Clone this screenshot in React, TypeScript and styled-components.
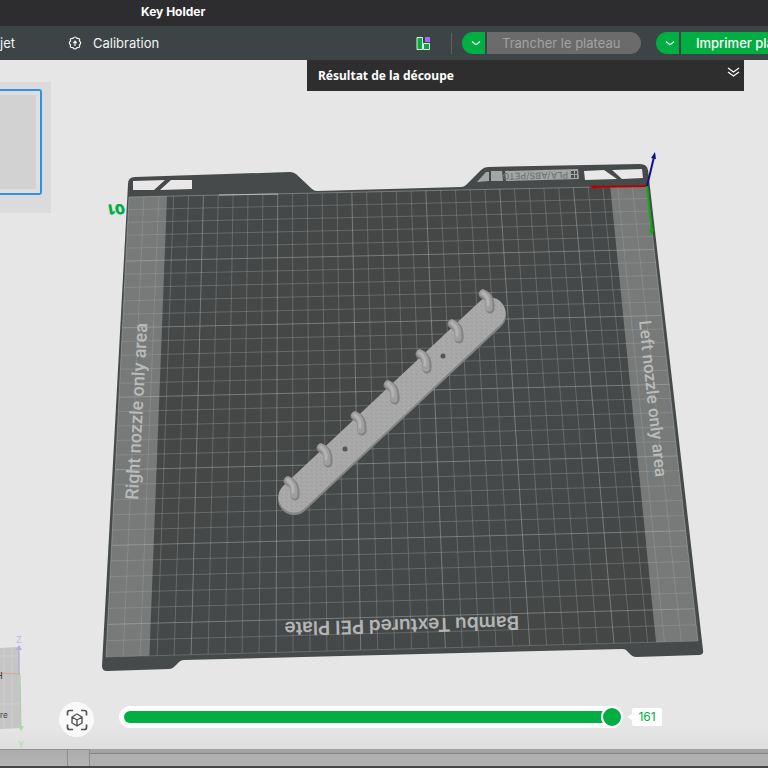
import React, { useState } from "react";
import styled, { createGlobalStyle } from "styled-components";

const GlobalStyle = createGlobalStyle`
  * { box-sizing: border-box; }
  body { margin: 0; background: #e6e6e6; font-family: Inter, "Noto Sans", sans-serif; }
  button { border: 0; padding: 0; font: inherit; color: inherit; cursor: pointer; }
`;

const Window = styled.div`
  min-height: 100vh;
  display: flex;
  flex-direction: column;
  overflow: hidden;
`;

const TitleBar = styled.header`
  height: 26px;
  padding-left: 141px;
  background: #2d2d2f;
  color: #fff;
  h1 { margin: 0; font-size: 12px; line-height: 24px; font-weight: 700; }
`;

const Toolbar = styled.nav`
  height: 34px;
  display: flex;
  align-items: center;
  background: #3c4446;
  color: #f4f5f5;
  font-size: 13px;
  line-height: 20px;
`;

const NavLink = styled.a`
  display: flex;
  align-items: center;
  gap: 11px;
  margin-right: 53px;
  color: inherit;
  text-decoration: none;
`;

const Tools = styled.div`
  margin-left: auto;
  display: flex;
  align-items: center;
`;

const IconButton = styled.button`
  display: flex;
  background: none;
`;

const Divider = styled.span`
  width: 1px;
  height: 21px;
  margin: 0 10px 0 20px;
  background: #5b6364;
`;

const Split = styled.div`
  display: flex;
  gap: 2px;
  & + & { margin-left: 15px; }
`;

const ArrowButton = styled.button`
  width: 23px;
  height: 22px;
  display: flex;
  align-items: center;
  justify-content: center;
  padding-left: 4px;
  border-radius: 11px 0 0 11px;
  background: #00ae42;
`;

const ActionButton = styled.button<{ $primary?: boolean }>`
  width: ${(p) => (p.$primary ? 87 : 154)}px;
  height: 22px;
  padding-left: 15px;
  overflow: hidden;
  white-space: nowrap;
  text-align: left;
  line-height: 21px;
  border-radius: ${(p) => (p.$primary ? "0" : "0 11px 11px 0")};
  background: ${(p) => (p.$primary ? "#00ae42" : "#6b6b6b")};
  color: ${(p) => (p.$primary ? "#fff" : "#a2a2a2")};
  font-weight: ${(p) => (p.$primary ? 500 : 400)};
`;

const Viewport = styled.main`
  position: relative;
  flex: 1;
  display: flex;
  flex-direction: column;
  justify-content: space-between;
  min-height: 480px;
  background: linear-gradient(#e6e6e6 calc(100% - 24px), #dedede);
`;

const Scene = styled.svg`
  position: absolute;
  inset: 0;
  width: 100%;
  height: 100%;
`;

const TopRow = styled.div`
  position: relative;
  display: flex;
  align-items: flex-start;
`;

const PlateList = styled.aside`
  width: 51px;
  height: 131px;
  margin-top: 22px;
  padding-top: 7px;
  background: #dbdbdb;
`;

const PlateThumb = styled.button`
  display: block;
  width: 42px;
  height: 106px;
  padding: 4px 4px 4px 0;
  border: 2px solid #2b93ec;
  border-left: 0;
  border-radius: 0 3px 3px 0;
  background: #dedede;
  &::before { content: ""; display: block; height: 100%; background: #d2d2d2; }
`;

const ResultPanel = styled.section`
  flex: 1;
  height: 31px;
  margin: 0 24px 0 256px;
  padding: 0 4px 0 11px;
  display: flex;
  justify-content: space-between;
  align-items: center;
  background: #2e2e2e;
  color: #fff;
  h2 { margin: 0; font-family: "Noto Sans", sans-serif; font-size: 12px; line-height: 30px; font-weight: 700; }
  button { margin-bottom: 7px; }
`;

const BottomRow = styled.div`
  position: relative;
  display: flex;
  align-items: center;
  padding: 0 106px 12px 59px;
`;

const RoundButton = styled.button`
  width: 35px;
  height: 35px;
  display: flex;
  align-items: center;
  justify-content: center;
  border-radius: 50%;
  background: #f9f9f9;
`;

const SliderGroup = styled.div`
  flex: 1;
  display: flex;
  align-items: center;
  gap: 9px;
  margin-left: 25px;
  padding-bottom: 6px;
`;

const Slider = styled.input`
  flex: 1;
  min-width: 0;
  height: 22px;
  margin: 0;
  padding: 0 0 0 5px;
  appearance: none;
  border-radius: 11px;
  background: #fff;
  &::-webkit-slider-runnable-track {
    height: 12px;
    border-radius: 6px;
    background: #00ae42;
  }
  &::-webkit-slider-thumb {
    appearance: none;
    width: 22px;
    height: 22px;
    margin-top: -5px;
    border: 2px solid #fff;
    border-radius: 50%;
    background: #00ae42;
  }
`;

const Value = styled.output`
  position: relative;
  width: 30px;
  border-radius: 2px;
  background: #fff;
  color: #00ae42;
  font-size: 12px;
  line-height: 18px;
  text-align: center;
  &::before {
    content: "";
    position: absolute;
    left: -5px;
    top: 6px;
    border: 3px solid transparent;
    border-right: 5px solid #fff;
    border-left: 0;
  }
`;

const Desktop = styled.footer`
  height: 19px;
  display: flex;
  background: linear-gradient(#929292 0 1px, #acacac 1px, #b4b4b4 17px, #4a4545 17px);
`;

const DesktopPane = styled.div<{ $width?: number }>`
  flex: ${(p) => (p.$width ? `0 0 ${p.$width}px` : 1)};
  height: 17px;
  border-right: 1px solid ${(p) => (p.$width ? "#8e8e8e" : "transparent")};
  background: ${(p) =>
    p.$width ? "none" : "linear-gradient(#a3a3a3 4px, #858585 4px 5px, #b0b0b0 5px)"};
`;

type Point = [number, number];

// Corners of the printable bed in drawing units: near origin row first.
const TL: Point = [129, 197];
const TR: Point = [647, 186];
const BR: Point = [698, 641];
const BL: Point = [106, 657];

// Perspective mapping of the unit square onto the bed.
const sx = TL[0] - TR[0] + BR[0] - BL[0];
const sy = TL[1] - TR[1] + BR[1] - BL[1];
const dx1 = TR[0] - BR[0];
const dx2 = BL[0] - BR[0];
const dy1 = TR[1] - BR[1];
const dy2 = BL[1] - BR[1];
const det = dx1 * dy2 - dx2 * dy1;
const g = (sx * dy2 - dx2 * sy) / det;
const h = (dx1 * sy - sx * dy1) / det;

function project(u: number, v: number): Point {
  const w = g * u + h * v + 1;
  return [
    ((TR[0] - TL[0] + g * TR[0]) * u + (BL[0] - TL[0] + h * BL[0]) * v + TL[0]) / w,
    ((TR[1] - TL[1] + g * TR[1]) * u + (BL[1] - TL[1] + h * BL[1]) * v + TL[1]) / w,
  ];
}

const COLS = 35;
const ROWS = 32;

function linePath(a: Point, b: Point) {
  return `M${a[0]} ${a[1]}L${b[0]} ${b[1]}`;
}

function gridPath(major: boolean) {
  let d = "";
  for (let i = 0; i <= COLS; i++)
    if ((i % 5 === 0) === major) d += linePath(project(i / COLS, 0), project(i / COLS, 1));
  for (let j = 0; j <= ROWS; j++)
    if ((j % 5 === 0) === major) d += linePath(project(0, j / ROWS), project(1, j / ROWS));
  return d;
}

function quad(u0: number, u1: number) {
  return [project(u0, 0), project(u1, 0), project(u1, 1), project(u0, 1)].join(" ");
}

const hooks: Point[] = [
  [295, 496], [328, 463], [362, 431], [395, 400], [427, 369], [459, 339], [490, 309],
];

function Bed() {
  return (
    <g>
      <path
        d="M128 184Q128 177 135 177L290 172Q293 172 296 174L312 189Q314 191 317 191L461 187Q464 187 466 185L481 170Q484 167 488 167L640 164Q647 164 648 170L703 650Q704 655 699 655L636 657Q633 657 631 655L626 650Q625 649 622 649L184 660Q181 660 179 662L174 667Q172 669 169 669L107 671Q102 671 102 666Z"
        fill="#464a4a"
      />
      <path d="M133 181L165 180L154 190L133 190ZM171 180L192 180L192 189L160 190Z" fill="#e8e8e8" />
      <path d="M584 171L604 170L617 179L585 180ZM612 170L642 169L643 178L622 179Z" fill="#e8e8e8" />
      <path d="M477 182L486 172L489 172L489 181ZM491 171L502 171L503 181L491 181ZM505 171L578 169L579 179L506 181Z" fill="#a3a6a5" />
      <path d="M571 171h3v3h-3zM575 171h2v3h-2zM571 175h3v3h-3zM575 175h2v3h-2z" fill="#4c4f4e" />
      <text transform="translate(568 172) rotate(179)" fontSize="9" fontWeight="500" fill="#717574">PLA/ABS/PETG</text>
      <polygon points={quad(0, 1)} fill="url(#bedFill)" />
      <polygon points={quad(0, 2.55 / 35)} fill="#777a79" />
      <polygon points={quad(32.5 / 35, 1)} fill="#777a79" />
      <path d={gridPath(false)} stroke="#a3a8a6" strokeOpacity=".34" fill="none" />
      <path d={gridPath(true)} stroke="#b4b8b6" strokeOpacity=".46" fill="none" />
      <path d="M219 195L278 194" stroke="#b9bcbb" />
      <g fontFamily="Roboto, sans-serif" fontWeight="500" fill="#b9bbba">
        <text transform="translate(138 500) rotate(-87)" fontSize="18">Right nozzle only area</text>
        <text transform="translate(639 321) rotate(84)" fontSize="17">Left nozzle only area</text>
      </g>
      <text transform="translate(519 616) rotate(178.5)" fontFamily="Inter, sans-serif" fontWeight="600" fontSize="19" fill="#b4b6b5">
        Bambu Textured PEI Plate
      </text>
      <text transform="translate(124 204) rotate(178) skewX(8)" fontFamily="Inter, sans-serif" fontWeight="900" fontSize="14" fill="#00ae42">01</text>
    </g>
  );
}

function KeyHolder() {
  return (
    <g strokeLinecap="round" fill="none">
      <path d="M294 499L490 315" stroke="#858585" strokeWidth="32" />
      <path d="M294 497L490 313" stroke="#a9a9a9" strokeWidth="31" />
      <path d="M294 497L490 313" stroke="url(#weave)" strokeWidth="29" />
      <g fill="#555">
        <circle cx="345" cy="449" r="2.5" />
        <circle cx="443" cy="356" r="2.5" />
      </g>
      {hooks.map(([x, y]) => (
        <g key={x} transform={`translate(${x} ${y})`}>
          <path d="M-7 -15Q1 -12 0 0" stroke="#838383" strokeWidth="9" />
          <path d="M-7 -16Q0 -12 -1 -1" stroke="#9f9f9f" strokeWidth="7" />
          <path d="M-7 -16Q-1 -12 -2 -4" stroke="#b3b3b3" strokeWidth="3" />
        </g>
      ))}
    </g>
  );
}

function Axes() {
  return (
    <g strokeWidth="2">
      <path d="M647 186L592 187" stroke="#b80000" />
      <path d="M589 187L596 185V189Z" fill="#b80000" />
      <path d="M647 186L652 232" stroke="#08b008" />
      <path d="M652 236L649 230L654 229Z" fill="#08b008" />
      <path d="M647 186L654 157" stroke="#10108c" />
      <path d="M655 152L651 158L656 159Z" fill="#10108c" />
    </g>
  );
}

function OrientationCube() {
  return (
    <g>
      <path d="M0 648L19 647L21 728L0 729Z" fill="#c5c5c5" />
      <path d="M4 648V728M12 648V728M0 656H20M0 704H20" stroke="#cecece" />
      <path d="M0 673L20 674" stroke="#d4a4a1" />
      <path d="M19 648V674" stroke="#a9a6d8" />
      <path d="M16 650L19 645L22 650Z" fill="#b0ade0" />
      <path d="M20 674L21 727" stroke="#a5d0a2" />
      <path d="M18 726H24L21 731Z" fill="#a5d8a5" />
      <g fontSize="9">
        <text x="16" y="643" fill="#b9b7e3">Z</text>
        <text x="18" y="748" fill="#aedcae">Y</text>
        <text x="-4" y="679" fill="#333">H</text>
        <text x="0" y="718" fontSize="8" fill="#444">re</text>
      </g>
    </g>
  );
}

function Chevron() {
  return (
    <svg width="10" height="6" viewBox="0 0 10 6" fill="none" stroke="#fff" strokeWidth="1.2" strokeLinejoin="round" aria-hidden="true">
      <path d="M1 1.5L4 4Q5 4.7 6 4L9 1.5" />
    </svg>
  );
}

export default function App() {
  const [layer, setLayer] = useState(161);
  return (
    <>
      <GlobalStyle />
      <Window>
        <TitleBar><h1>Key Holder</h1></TitleBar>
        <Toolbar>
          <NavLink href="#projet">jet</NavLink>
          <NavLink href="#calibration">
            <svg width="14" height="14" viewBox="0 0 14 14" fill="none" stroke="#f4f5f5" strokeWidth="1.2" strokeLinejoin="round" aria-hidden="true">
              <path d="M5 2.4Q7 -.4 9 2.4Q12.6 2.2 11.4 5Q14 7 11.4 9Q12.6 11.8 9 11.6Q7 14.4 5 11.6Q1.4 11.8 2.6 9Q0 7 2.6 5Q1.4 2.2 5 2.4Z" />
              <path d="M7 10V5" />
              <path d="M5 7L7 4.5L9 7Z" fill="#f4f5f5" strokeWidth=".5" />
            </svg>
            Calibration
          </NavLink>
          <Tools>
            <IconButton aria-label="Disposition">
              <svg width="15" height="15" viewBox="0 0 15 15" aria-hidden="true">
                <path d="M1 1.5H6.5V13.5H1ZM7.5 7.5H13.5V13.5H7.5Z" fill="#00ae42" stroke="#e5ebe8" />
                <path d="M9 1h5v5H9z" fill="#a36bff" />
              </svg>
            </IconButton>
            <Divider />
            <Split>
              <ArrowButton aria-label="Options de découpe"><Chevron /></ArrowButton>
              <ActionButton disabled>Trancher le plateau</ActionButton>
            </Split>
            <Split>
              <ArrowButton aria-label="Options d'impression"><Chevron /></ArrowButton>
              <ActionButton $primary>Imprimer plateau</ActionButton>
            </Split>
          </Tools>
        </Toolbar>
        <Viewport>
          <Scene viewBox="0 60 768 689" preserveAspectRatio="xMidYMid meet" role="img" aria-label="Plateau">
            <defs>
              <linearGradient id="bedFill" x1="0" y1="0" x2="1" y2="1">
                <stop offset="0" stopColor="#454a4b" />
                <stop offset=".3" stopColor="#454746" />
                <stop offset=".6" stopColor="#454949" />
                <stop offset="1" stopColor="#444645" />
              </linearGradient>
              <pattern id="weave" width="5" height="4" patternUnits="userSpaceOnUse">
                <path d="M0 1L3 3" stroke="#979797" strokeWidth=".7" />
              </pattern>
            </defs>
            <Bed />
            <KeyHolder />
            <Axes />
            <OrientationCube />
          </Scene>
          <TopRow>
            <PlateList><PlateThumb aria-label="Plateau 1" /></PlateList>
            <ResultPanel>
              <h2>Résultat de la découpe</h2>
              <IconButton aria-label="Déplier">
                <svg width="13" height="10" viewBox="0 0 13 10" fill="none" stroke="#fff" strokeWidth="1.2" aria-hidden="true">
                  <path d="M1 1L6.5 5L12 1M1 5L6.5 9L12 5" />
                </svg>
              </IconButton>
            </ResultPanel>
          </TopRow>
          <BottomRow>
            <RoundButton aria-label="Recentrer la vue">
              <svg width="22" height="22" viewBox="0 0 22 22" fill="none" stroke="#555" strokeWidth="1.7" strokeLinejoin="round" aria-hidden="true">
                <path d="M1.5 6.5V3.5Q1.5 1.5 3.5 1.5H7M15 1.5H18.5Q20.5 1.5 20.5 3.5V6.5M20.5 15.5V18.5Q20.5 20.5 18.5 20.5H15M7 20.5H3.5Q1.5 20.5 1.5 18.5V15.5" />
                <path d="M11 5L16 8V14L11 17L6 14V8ZM6 8L11 11L16 8M11 11V17" strokeWidth="1.4" />
              </svg>
            </RoundButton>
            <SliderGroup>
              <Slider
                id="layer"
                type="range"
                min={0}
                max={161}
                value={layer}
                aria-label="Couche"
                onChange={(e) => setLayer(Number(e.target.value))}
              />
              <Value htmlFor="layer">{layer}</Value>
            </SliderGroup>
          </BottomRow>
        </Viewport>
        <Desktop>
          <DesktopPane $width={68} />
          <DesktopPane $width={22} />
          <DesktopPane />
        </Desktop>
      </Window>
    </>
  );
}
